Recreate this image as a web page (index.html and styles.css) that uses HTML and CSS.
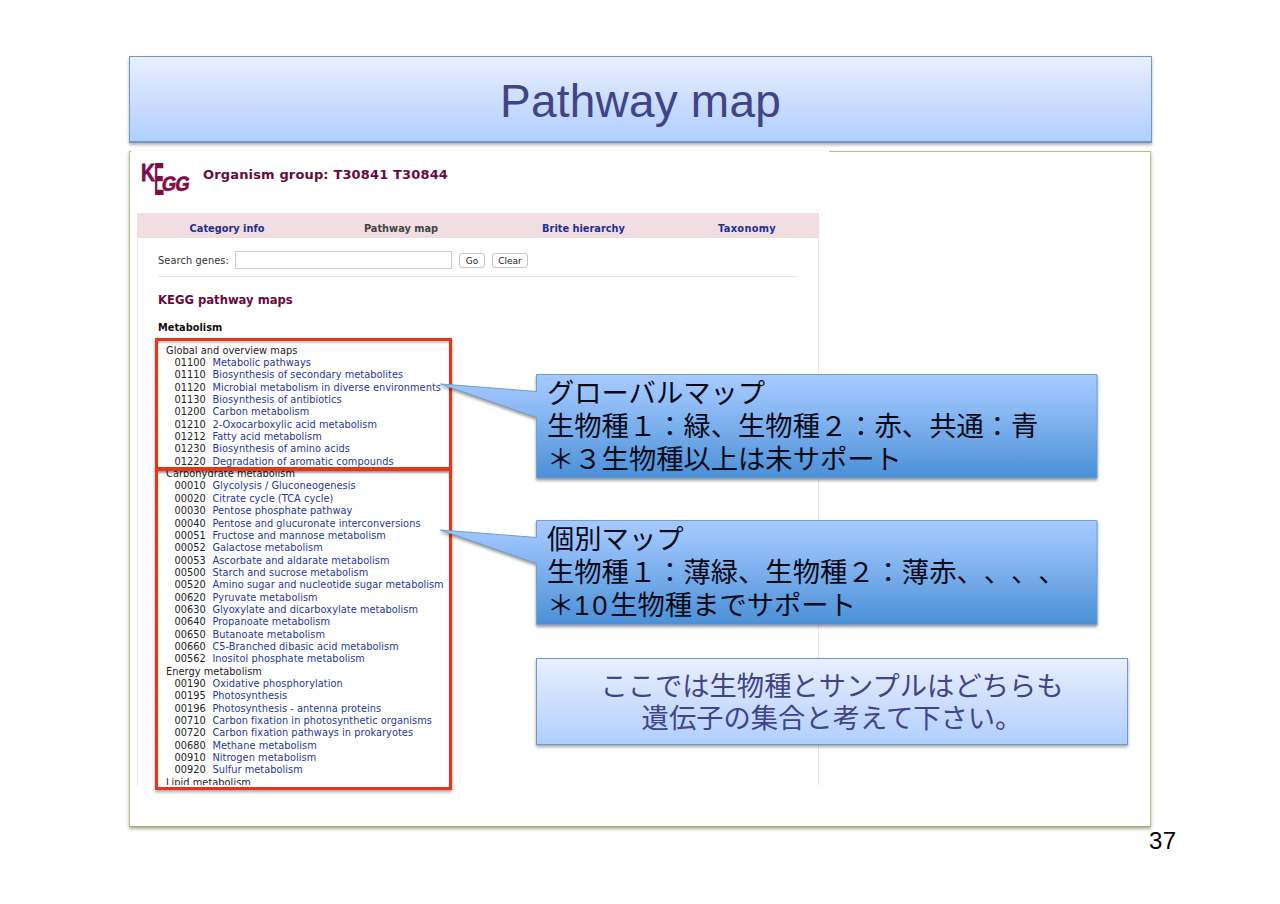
FILE: index.html
```
<!DOCTYPE html>
<html lang="ja">
<head>
<meta charset="utf-8">
<title>Pathway map</title>
<link rel="stylesheet" href="styles.css">
</head>
<body>
<main class="slide">
  <h1 class="slide-title">Pathway map</h1>
  <section class="panel">
    <div class="shot">
      <header class="shot-head">
        <svg class="logo" width="50" height="34" viewBox="0 0 50 34" role="img" aria-label="KEGG">
          <g class="logo-text">
            <text transform="translate(0 18.5) scale(.84 1.08)" font-size="23">K</text>
            <text class="tall" transform="translate(13 32.5) scale(.66 1.98)" font-size="23">E</text>
            <text transform="translate(20 29) rotate(-3) skewX(-12) scale(.92 1)" font-size="20">G</text>
            <text transform="translate(33.5 29) rotate(-3) skewX(-12) scale(.92 1)" font-size="20">G</text>
          </g>
        </svg>
        <h2 class="organism">Organism group: T30841 T30844</h2>
      </header>
      <div class="frame">
        <nav class="tabs">
          <a>Category info</a><a class="current">Pathway map</a><a>Brite hierarchy</a><a>Taxonomy</a>
        </nav>
        <div class="content">
          <div class="search"><span class="search-label">Search genes:</span><span class="field"></span><span class="btn go">Go</span><span class="btn clear">Clear</span></div>
          <h3 class="maps-title">KEGG pathway maps</h3>
          <h4 class="meta">Metabolism</h4>
          <ul class="list">
            <li class="group">Global and overview maps</li>
            <li><b>01100</b><a>Metabolic pathways</a></li>
            <li><b>01110</b><a>Biosynthesis of secondary metabolites</a></li>
            <li><b>01120</b><a>Microbial metabolism in diverse environments</a></li>
            <li><b>01130</b><a>Biosynthesis of antibiotics</a></li>
            <li><b>01200</b><a>Carbon metabolism</a></li>
            <li><b>01210</b><a>2-Oxocarboxylic acid metabolism</a></li>
            <li><b>01212</b><a>Fatty acid metabolism</a></li>
            <li><b>01230</b><a>Biosynthesis of amino acids</a></li>
            <li><b>01220</b><a>Degradation of aromatic compounds</a></li>
            <li class="group">Carbohydrate metabolism</li>
            <li><b>00010</b><a>Glycolysis / Gluconeogenesis</a></li>
            <li><b>00020</b><a>Citrate cycle (TCA cycle)</a></li>
            <li><b>00030</b><a>Pentose phosphate pathway</a></li>
            <li><b>00040</b><a>Pentose and glucuronate interconversions</a></li>
            <li><b>00051</b><a>Fructose and mannose metabolism</a></li>
            <li><b>00052</b><a>Galactose metabolism</a></li>
            <li><b>00053</b><a>Ascorbate and aldarate metabolism</a></li>
            <li><b>00500</b><a>Starch and sucrose metabolism</a></li>
            <li><b>00520</b><a>Amino sugar and nucleotide sugar metabolism</a></li>
            <li><b>00620</b><a>Pyruvate metabolism</a></li>
            <li><b>00630</b><a>Glyoxylate and dicarboxylate metabolism</a></li>
            <li><b>00640</b><a>Propanoate metabolism</a></li>
            <li><b>00650</b><a>Butanoate metabolism</a></li>
            <li><b>00660</b><a>C5-Branched dibasic acid metabolism</a></li>
            <li><b>00562</b><a>Inositol phosphate metabolism</a></li>
            <li class="group">Energy metabolism</li>
            <li><b>00190</b><a>Oxidative phosphorylation</a></li>
            <li><b>00195</b><a>Photosynthesis</a></li>
            <li><b>00196</b><a>Photosynthesis - antenna proteins</a></li>
            <li><b>00710</b><a>Carbon fixation in photosynthetic organisms</a></li>
            <li><b>00720</b><a>Carbon fixation pathways in prokaryotes</a></li>
            <li><b>00680</b><a>Methane metabolism</a></li>
            <li><b>00910</b><a>Nitrogen metabolism</a></li>
            <li><b>00920</b><a>Sulfur metabolism</a></li>
            <li class="group">Lipid metabolism</li>
          </ul>
        </div>
      </div>
    </div>
  </section>
  <div class="mark mark-global"></div>
  <div class="mark mark-single"></div>

  <div class="callout callout-global">
    <svg class="bubble" width="660" height="106" viewBox="0 0 660 106">
      <defs><linearGradient id="blue" x1="0" y1="0" x2="0" y2="1"><stop offset="0" stop-color="#a5c9ff"/><stop offset=".2" stop-color="#98c1fa"/><stop offset="1" stop-color="#4a90d6"/></linearGradient></defs>
      <path d="M96.500 .5H657V104H96.500V43.500L.5 10 96.500 17.500Z"/>
    </svg>
    <p>グローバルマップ<br>生物種１：緑、生物種２：赤、共通：青<br>＊３生物種以上は未サポート</p>
  </div>
  <div class="callout callout-single">
    <svg class="bubble" width="660" height="106" viewBox="0 0 660 106">
      <path d="M96.500 .5H657V104.500H96.500V43.500L.5 10 96.500 17.500Z"/>
    </svg>
    <p>個別マップ<br>生物種１：薄緑、生物種２：薄赤、、、、<br>＊<span class="num">10</span>生物種までサポート</p>
  </div>
  <p class="note">ここでは生物種とサンプルはどちらも<br>遺伝子の集合と考えて下さい。</p>
  <footer class="page-no">37</footer>
</main>
</body>
</html>
```
FILE: styles.css
```
* { box-sizing: border-box; }
body { margin: 0; background: #fff; }
h1, h2, h3, h4, p, ul { margin: 0; padding: 0; }
.slide {
  position: relative;
  width: 1280px;
  height: 904px;
  overflow: hidden;
  padding: 56px 128px 0 129px;
}
.slide-title {
  height: 87px;
  border: 1.5px solid #7197c4;
  border-bottom-width: 2px;
  background: linear-gradient(#e8f0ff, #cbdcfd 55%, #afd0ff);
  box-shadow: 0 2px 3px rgba(0, 0, 0, .3);
  color: #414487;
  font: 400 46px/88px "Liberation Sans", Arial, sans-serif;
  letter-spacing: .2px;
  text-align: center;
}
.panel {
  width: 1022px;
  height: 676px;
  margin-top: 8px;
  border: 1px solid #b2c584;
  border-bottom-color: #a3a878;
  box-shadow: 0 2px 3px rgba(60, 70, 30, .45);
  background: #fff;
}
.shot {
  width: 698px;
  height: 634px;
  margin: -1px 0 0 1px;
  padding-left: 6px;
  overflow: hidden;
  background: #fff;
  font-family: "DejaVu Sans", Verdana, sans-serif;
}
.shot-head { display: flex; height: 62px; padding: 11px 0 0 4px; }
.logo { overflow: visible; }
.logo-text { fill: #810c45; stroke: #810c45; stroke-width: .7; font-family: "Liberation Sans", Arial, sans-serif; font-weight: 700; }
.logo-text .tall { stroke: none; }
.organism { margin: 4px 0 0 12px; font-size: 13px; line-height: 18px; letter-spacing: .15px; color: #6a0a3c; white-space: nowrap; }
.frame { width: 682px; height: 580px; border: 1px solid #eee1e5; border-top: 0; }
.tabs {
  display: grid;
  grid-template-columns: 180px 168px 197px 1fr;
  height: 25px;
  margin: 0 -1px;
  padding-right: 7px;
  background: #f0dee2;
  font-size: 9.8px;
  font-weight: 700;
  line-height: 31px;
  text-align: center;
  color: #1e2f93;
}
.tabs a:last-child { letter-spacing: .3px; }
.current { color: #444; }
.content { padding: 13px 20px 0; }
.search { display: flex; width: 640px; height: 26px; border-bottom: 1.5px solid #eee1e5; font-size: 9.8px; color: #333; }
.search-label { width: 77px; line-height: 20px; letter-spacing: .1px; white-space: nowrap; }
.field { width: 217px; height: 18px; border: 1px solid #ccc; }
.btn { height: 15px; margin: 2px 0 0 7px; border: 1px solid #c4c4c4; border-radius: 3px; font: 9px/14px "DejaVu Sans", sans-serif; text-align: center; color: #222; }
.go { width: 26px; }
.clear { width: 36px; }
.maps-title { margin-top: 14px; font-size: 11.6px; line-height: 18px; color: #6a0a3c; }
.meta { margin-top: 10px; font-size: 9.8px; line-height: 17px; color: #111; }
.list { margin-top: 8.7px; list-style: none; font-size: 9.8px; line-height: 12.35px; letter-spacing: .045px; color: #222; white-space: nowrap; }
.list li { display: flex; padding-left: 16.4px; }
.list .group { padding-left: 8px; }
.list b { width: 38px; font-weight: 400; }
.list a { color: #26379a; }

/* highlight frames drawn over the pathway list */
.mark { position: absolute; left: 155px; width: 297px; border: 3px solid #e8351a; box-shadow: 0 2px 3px rgba(0, 0, 0, .35), inset 0 2px 2px rgba(0, 0, 0, .22); }
.mark-global { top: 338px; height: 132px; }
.mark-single { top: 468px; height: 322px; }

.callout { position: absolute; left: 440px; width: 660px; height: 106px; padding: 1px 0 0 107px; }
.callout-global { top: 374px; }
.callout-single { top: 520px; }
.callout p { position: relative; }
.bubble { position: absolute; left: 0; top: 0; overflow: visible; filter: drop-shadow(0 2px 1.5px rgba(0, 0, 0, .4)); }
.bubble path { fill: url(#blue); stroke: #6f9fd4; stroke-width: 1; }
.callout p, .note { font: 400 27.3px/33px "Noto Sans CJK JP", sans-serif; color: #050a18; white-space: nowrap; text-spacing-trim: space-all; }
.num { font-family: "Liberation Sans", Arial, sans-serif; letter-spacing: 2.8px; line-height: 1; }
.note {
  position: absolute;
  left: 536px;
  top: 658px;
  width: 592px;
  height: 87px;
  padding-top: 9px;
  border: 1.5px solid #7197c4;
  background: linear-gradient(#e8f0ff, #cbdcfd 55%, #afd0ff);
  box-shadow: 0 2px 3px rgba(0, 0, 0, .35);
  text-align: center;
}
.callout + .note { color: #414487; line-height: 32px; }
.page-no { margin: 0 0 0 1020px; font: 24px/28px "Liberation Sans", Arial, sans-serif; letter-spacing: .5px; color: #000; }
```
